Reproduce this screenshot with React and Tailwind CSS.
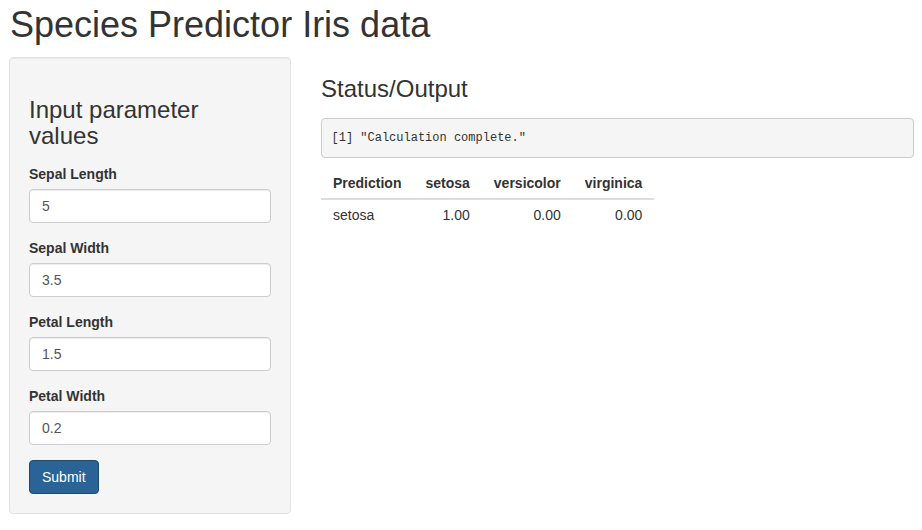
import React, { useState } from 'react';

const FIELDS = [
  { id: 'sl', label: 'Sepal Length', value: '5' },
  { id: 'sw', label: 'Sepal Width', value: '3.5' },
  { id: 'pl', label: 'Petal Length', value: '1.5' },
  { id: 'pw', label: 'Petal Width', value: '0.2' },
];

const RESULT = { prediction: 'setosa', setosa: '1.00', versicolor: '0.00', virginica: '0.00' };

export default function App() {
  const [values, setValues] = useState(Object.fromEntries(FIELDS.map(f => [f.id, f.value])));

  return (
    <div className="min-h-[530px] bg-white pl-[9px] pr-2 text-[14px] leading-[20px] text-[#333]" style={{ fontFamily: '"Liberation Sans", Arial, sans-serif' }}>
      <h1 className="pt-[5px] pl-px text-[36px] leading-[40px] font-normal">Species Predictor Iris data</h1>

      <div className="mt-[12px] flex items-start">
        {/* sidebar */}
        <div className="w-[282px] shrink-0 rounded border border-[#e3e3e3] bg-[#f5f5f5] p-[19px] pt-[39px] shadow-[inset_0_1px_1px_rgba(0,0,0,0.05)]">
          <h3 className="text-[24px] leading-[26.4px] font-normal">Input parameter values</h3>
          <div className="mt-[14px] flex flex-col gap-[15px]">
            {FIELDS.map(f => (
              <div key={f.id}>
                <label htmlFor={f.id} className="mb-[5px] block font-bold">{f.label}</label>
                <input
                  id={f.id}
                  value={values[f.id]}
                  onChange={e => setValues({ ...values, [f.id]: e.target.value })}
                  className="h-[34px] w-full rounded border border-[#ccc] bg-white px-3 text-[14px] text-[#555] shadow-[inset_0_1px_1px_rgba(0,0,0,0.075)] outline-none"
                />
              </div>
            ))}
            <div>
              <button className="h-[34px] rounded border border-[#1f4a70] bg-[#2a6395] px-3 text-[14px] text-white">Submit</button>
            </div>
          </div>
        </div>

        {/* main panel */}
        <div className="ml-[30px] w-[593px]">
          <h3 className="mt-[19px] text-[24px] leading-[26.4px] font-normal">Status/Output</h3>
          <pre className="mt-[16px] rounded border border-[#ccc] bg-[#f5f5f5] px-[9.5px] py-[9.5px] text-[12px] leading-[18.6px] text-[#333]" style={{ fontFamily: '"Liberation Mono", "DejaVu Sans Mono", monospace' }}>[1] "Calculation complete."</pre>
          <table className="mt-[10px] border-collapse">
            <thead>
              <tr className="border-b-2 border-[#ddd]">
                <th className="px-3 py-[5px] text-left font-bold">Prediction</th>
                <th className="px-3 py-[5px] text-right font-bold">setosa</th>
                <th className="px-3 py-[5px] text-right font-bold">versicolor</th>
                <th className="px-3 py-[5px] text-right font-bold">virginica</th>
              </tr>
            </thead>
            <tbody>
              <tr>
                <td className="px-3 py-[5px] text-left">{RESULT.prediction}</td>
                <td className="px-3 py-[5px] text-right">{RESULT.setosa}</td>
                <td className="px-3 py-[5px] text-right">{RESULT.versicolor}</td>
                <td className="px-3 py-[5px] text-right">{RESULT.virginica}</td>
              </tr>
            </tbody>
          </table>
        </div>
      </div>
    </div>
  );
}
